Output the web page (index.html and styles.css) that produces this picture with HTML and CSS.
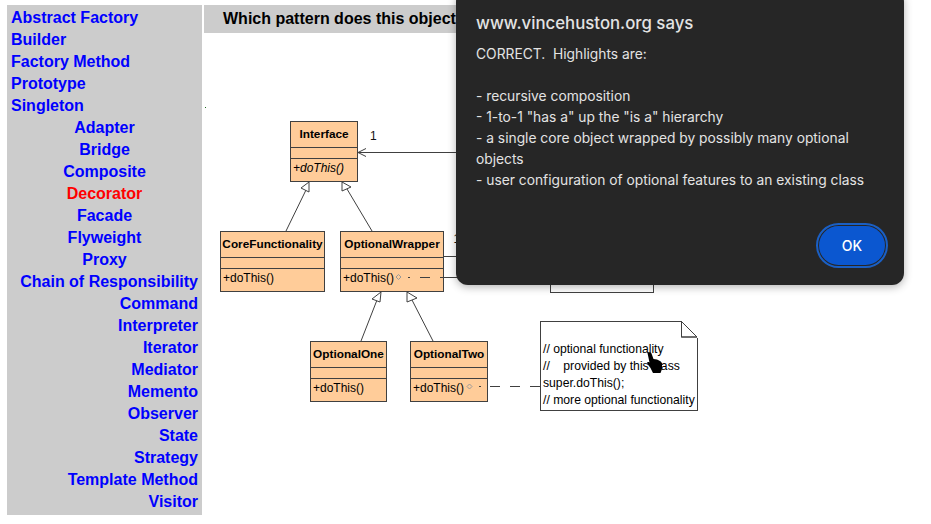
FILE: index.html
```html
<!DOCTYPE html>
<html lang="en">

<head>
  <meta charset="UTF-8">
  <title>Design pattern quiz</title>
  <link rel="stylesheet" href="styles.css">
</head>

<body>
  <div class="page">
    <nav class="patterns">
      <a class="left" href="#">Abstract Factory</a>
      <a class="left" href="#">Builder</a>
      <a class="left" href="#">Factory Method</a>
      <a class="left" href="#">Prototype</a>
      <a class="left" href="#">Singleton</a>
      <a class="middle" href="#">Adapter</a>
      <a class="middle" href="#">Bridge</a>
      <a class="middle" href="#">Composite</a>
      <a class="middle picked" href="#">Decorator</a>
      <a class="middle" href="#">Facade</a>
      <a class="middle" href="#">Flyweight</a>
      <a class="middle" href="#">Proxy</a>
      <a class="right" href="#">Chain of Responsibility</a>
      <a class="right" href="#">Command</a>
      <a class="right" href="#">Interpreter</a>
      <a class="right" href="#">Iterator</a>
      <a class="right" href="#">Mediator</a>
      <a class="right" href="#">Memento</a>
      <a class="right" href="#">Observer</a>
      <a class="right" href="#">State</a>
      <a class="right" href="#">Strategy</a>
      <a class="right" href="#">Template Method</a>
      <a class="right" href="#">Visitor</a>
    </nav>

    <main class="quiz">
      <h1 class="question">Which pattern does this object</h1>

      <!-- origin of the diagram is the top left of .quiz -->
      <div class="diagram">
        <div class="uml iface">
          <b>Interface</b>
          <span></span>
          <i>+doThis()</i>
        </div>
        <div class="uml core">
          <b>CoreFunctionality</b>
          <span></span>
          <em>+doThis()</em>
        </div>
        <div class="uml wrapper">
          <b>OptionalWrapper</b>
          <span></span>
          <em>+doThis()</em>
        </div>
        <div class="uml one">
          <b>OptionalOne</b>
          <span></span>
          <em>+doThis()</em>
        </div>
        <div class="uml two">
          <b>OptionalTwo</b>
          <span></span>
          <em>+doThis()</em>
        </div>

        <div class="box-behind"></div>

        <svg class="wires" width="727" height="482" viewBox="204 33 727 482">
          <g fill="none" stroke="#404040" stroke-width="1">
            <path d="M358 152.500H470"/>
            <path d="M366 148.500L358 152.500L366 156.500"/>
            <path d="M443 256.500H470"/>
            <path d="M286 231L306 190"/>
            <path d="M309 182L301 188L309 192Z" fill="#fff"/>
            <path d="M372 231L347 189"/>
            <path d="M342 182L342 191L351 187Z" fill="#fff"/>
            <path d="M361 341L377 300"/>
            <path d="M381 292L372 299L380 302Z" fill="#fff"/>
            <path d="M433 341L412 300"/>
            <path d="M407 292L407 302L417 298Z" fill="#fff"/>
            <path d="M408 277.500h2M420 277.500h10M440 277.500h20"/>
            <path d="M479 386.500h2M490 386.500h10M510 386.500h10M530 386.500h10"/>
            <path d="M398.500 274.500l2.500 2.500l-2.500 2.500l-2.500-2.500Z" stroke="#999"/>
            <path d="M469.500 384l2.500 2.500l-2.500 2.500l-2.500-2.500Z" stroke="#999"/>
          </g>
          <rect x="205" y="107" width="1" height="1" fill="#1a6a1a"/>
          <text class="mult" x="370" y="140">1</text>
          <text class="mult" x="453.500" y="243">1</text>
        </svg>

        <div class="note">
          <svg class="fold" width="17" height="17" viewBox="0 0 17 17">
            <path d="M0 0L16 16H0Z" fill="#fff" stroke="#404040"/>
            <path d="M0.500 0V16H16" fill="none" stroke="#404040"/>
          </svg>
          <p>// optional functionality</p>
          <p>//&nbsp;&nbsp;&nbsp;&nbsp;provided by this class</p>
          <p>super.doThis();</p>
          <p>// more optional functionality</p>
        </div>

        <svg class="hand" width="18" height="22" viewBox="0 0 18 22">
          <path d="M1.500 1C2 0 5 0 5.500 1.500L7.500 7L11 7.500L14 9L16 11V17L14.500 21H7L4.500 16L1.500 12C.5 10 2 9.500 3.500 10.500Z" fill="#000"/>
        </svg>
      </div>
    </main>
  </div>

  <div class="dialog">
    <h2 class="dialog-title">www.vincehuston.org says</h2>
    <p class="dialog-text">CORRECT.  Highlights are:

- recursive composition
- 1-to-1 "has a" up the "is a" hierarchy
- a single core object wrapped by possibly many optional objects
- user configuration of optional features to an existing class</p>
    <div class="dialog-actions">
      <button class="ok" type="button">OK</button>
    </div>
  </div>
</body>

</html>
```

FILE: styles.css
```css
html, body {
  margin: 0;
  height: 100%;
  background-color: #fff;
  overflow: hidden;
}

.page {
  display: flex;
  gap: 2px;
  padding: 5px 7px 0;
  font-family: "Liberation Sans", Arial, sans-serif;
}

.patterns {
  display: flex;
  flex-direction: column;
  flex: 0 0 187px;
  height: 508px;
  padding: 2px 4px 0;
  background-color: #ccc;
}

.patterns a {
  font-size: 16px;
  font-weight: bold;
  line-height: 22px;
  color: #00f;
  text-decoration: none;
}

.patterns .left {
  text-align: left;
}

.patterns .middle {
  text-align: center;
}

.patterns .right {
  text-align: right;
}

.patterns .picked {
  color: #f00;
}

.quiz {
  flex: 1;
}

.question {
  margin: 0;
  width: 500px;
  height: 28px;
  padding-left: 19px;
  font-size: 16px;
  font-weight: bold;
  line-height: 27px;
  color: #000;
  background-color: #ccc;
}

/* nodes of the uml diagram sit on a free canvas */
.diagram {
  position: relative;
  height: 482px;
}

.wires {
  position: absolute;
  left: 0;
  top: 0;
}

.mult {
  font-family: "Liberation Sans", Arial, sans-serif;
  font-size: 12px;
  fill: #111;
}

.uml {
  position: absolute;
  display: flex;
  flex-direction: column;
  box-sizing: border-box;
  height: 61px;
  border: 1px solid #404040;
  background-color: #fc9;
  font-size: 12px;
  color: #000;
}

.uml b {
  height: 26px;
  padding-top: 1px;
  line-height: 23px;
  font-size: 11.800px;
  text-align: center;
  white-space: nowrap;
  border-bottom: 1px solid #404040;
  box-sizing: border-box;
}

.uml span {
  height: 10px;
  border-bottom: 1px solid #404040;
}

.uml i,
.uml em {
  padding-left: 2px;
  line-height: 18px;
  font-style: normal;
}

.uml i {
  font-style: italic;
}

.iface {
  left: 86px;
  top: 88px;
  width: 68px;
}

.core {
  left: 16px;
  top: 198px;
  width: 105px;
}

.wrapper {
  left: 136px;
  top: 198px;
  width: 104px;
}

.one {
  left: 106px;
  top: 308px;
  width: 77px;
}

.two {
  left: 206px;
  top: 308px;
  width: 78px;
}

.box-behind {
  position: absolute;
  left: 346px;
  top: 200px;
  box-sizing: border-box;
  width: 104px;
  height: 60px;
  border: 1px solid #404040;
}

.note {
  position: absolute;
  left: 336px;
  top: 288px;
  box-sizing: border-box;
  width: 158px;
  height: 90px;
  padding-top: 19px;
  padding-left: 2px;
  border: 1px solid #404040;
  background-color: #fff;
  font-size: 12.200px;
  color: #000;
  white-space: nowrap;
}

.note p {
  margin: 0;
  line-height: 17px;
}

.fold {
  position: absolute;
  right: -1px;
  top: -1px;
  background-color: #fff;
}

.hand {
  position: absolute;
  left: 442px;
  top: 319px;
}

.dialog {
  position: absolute;
  left: 456px;
  top: -10px;
  box-sizing: border-box;
  width: 448px;
  height: 295px;
  padding: 20px;
  padding-top: 23px;
  border-radius: 12px;
  background-color: #262626;
  box-shadow: 0 2px 8px rgba(0, 0, 0, 0.3);
  font-family: Inter, "Noto Sans", sans-serif;
  color: #e3e3e3;
}

.dialog-title {
  margin: 0;
  font-size: 16.800px;
  font-weight: 500;
  line-height: 20px;
}

.dialog-text {
  margin: 11px 0 0;
  font-size: 13.800px;
  line-height: 21px;
  white-space: pre-wrap;
}

.dialog-actions {
  position: absolute;
  right: 19px;
  bottom: 20px;
}

.ok {
  display: block;
  width: 66px;
  height: 39px;
  padding: 0;
  border: 0;
  border-radius: 20px;
  background-color: #0b57d0;
  outline: 2px solid #1a5fc4;
  outline-offset: 1px;
  font-family: Inter, "Noto Sans", sans-serif;
  font-size: 14px;
  font-weight: 500;
  color: #fff;
}
```
